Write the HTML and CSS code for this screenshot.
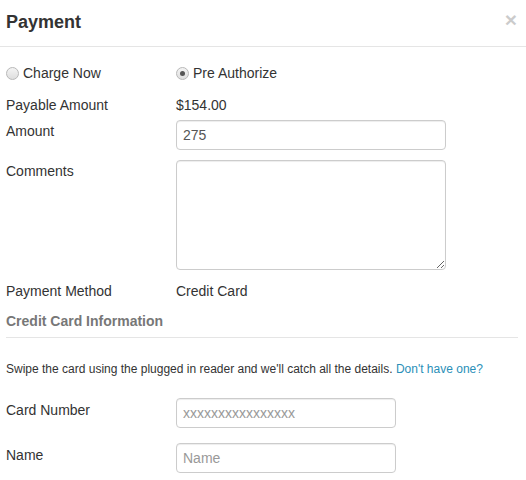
FILE: index.html
```html
<!DOCTYPE html>
<html>
<head>
<meta charset="utf-8">
<link rel="stylesheet" href="styles.css">
</head>
<body>
<div class="modal">
  <div class="modal-header">
    <h4 class="title">Payment</h4>
    <span class="close">&times;</span>
  </div>
  <div class="modal-body">
    <div class="row radios">
      <label class="radio"><span class="dot"></span>Charge Now</label>
      <label class="radio"><span class="dot checked"></span>Pre Authorize</label>
    </div>
    <div class="row payable">
      <div class="lbl">Payable Amount</div>
      <div class="val">$154.00</div>
    </div>
    <div class="row amount">
      <div class="lbl">Amount</div>
      <input class="field wide" type="text" value="275">
    </div>
    <div class="row comments">
      <div class="lbl">Comments</div>
      <textarea class="field wide area"></textarea>
    </div>
    <div class="row method">
      <div class="lbl">Payment Method</div>
      <div class="val">Credit Card</div>
    </div>
    <div class="section">Credit Card Information</div>
    <p class="hint">Swipe the card using the plugged in reader and we'll catch all the details. <a href="#" class="link">Don't have one?</a></p>
    <div class="row card">
      <div class="lbl">Card Number</div>
      <input class="field narrow" type="text" placeholder="xxxxxxxxxxxxxxxx">
    </div>
    <div class="row name">
      <div class="lbl">Name</div>
      <input class="field narrow" type="text" placeholder="Name">
    </div>
  </div>
</div>
</body>
</html>
```
FILE: styles.css
```css
html, body {
  margin: 0;
  padding: 0;
  background: #fff;
}
body {
  font-family: "Liberation Sans", Arial, sans-serif;
  font-size: 14px;
  line-height: 20px;
  color: #333;
}
.modal {
  width: 526px;
}
.modal-header {
  height: 47px;
  border-bottom: 1px solid #e5e5e5;
  display: flex;
  align-items: center;
  justify-content: space-between;
  padding: 0 9px 0 6px;
  box-sizing: border-box;
}
.title {
  margin: 0;
  font-size: 18px;
  font-weight: bold;
  color: #333;
  line-height: 22px;
  padding-bottom: 2px;
}
.close {
  font-size: 21px;
  font-weight: bold;
  color: #000;
  opacity: 0.2;
  line-height: 1;
  margin-top: -8px;
}
.modal-body {
  padding: 16px 8px 0 6px;
}
.row {
  display: grid;
  grid-template-columns: 170px 1fr;
  align-items: start;
}
.lbl, .val {
  padding-top: 1px;
}
.card .lbl, .name .lbl {
  padding-top: 2px;
}
.radios {
  height: 20px;
}
.radio {
  display: flex;
  align-items: center;
}
.dot {
  width: 13px;
  height: 13px;
  border-radius: 50%;
  border: 1px solid #b8b8b8;
  background: linear-gradient(#f4f4f4, #dedede);
  box-sizing: border-box;
  margin-right: 4px;
  position: relative;
  flex: none;
}
.dot.checked::after {
  content: "";
  position: absolute;
  left: 3px;
  top: 3px;
  width: 5px;
  height: 5px;
  border-radius: 50%;
  background: #555;
}
.payable {
  margin-top: 11px;
}
.amount {
  margin-top: 5px;
}
.comments {
  margin-top: 10px;
}
.method {
  margin-top: 10px;
}
.field {
  box-sizing: border-box;
  height: 30px;
  border: 1px solid #ccc;
  border-radius: 4px;
  padding: 4px 6px;
  font-family: "Liberation Sans", Arial, sans-serif;
  font-size: 14px;
  color: #555;
  background: #fff;
  margin: 0;
  box-shadow: inset 0 1px 1px rgba(0,0,0,0.075);
}
.field::placeholder {
  color: #999;
}
.wide {
  width: 270px;
}
.area {
  height: 110px;
  resize: vertical;
  display: block;
}
.narrow {
  width: 220px;
}
.section {
  margin-top: 10px;
  font-weight: bold;
  color: #777;
  padding-bottom: 6px;
  border-bottom: 1px solid #e5e5e5;
}
.hint {
  margin: 23px 0 0;
  font-size: 12px;
  line-height: 17px;
}
.link {
  color: #2a8fb8;
  text-decoration: none;
}
.card {
  margin-top: 20px;
}
.name {
  margin-top: 15px;
}
```
